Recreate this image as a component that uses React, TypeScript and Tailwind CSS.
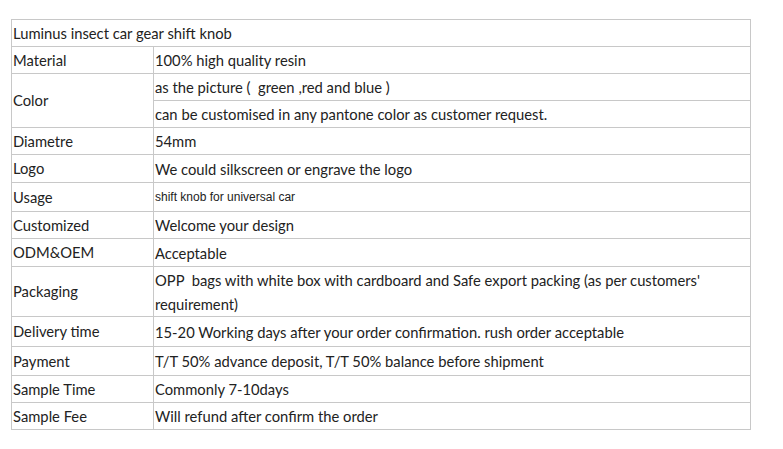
const rows: { label: string; values: string[]; h: number[]; small?: boolean }[] = [
  { label: "Material", values: ["100% high quality resin"], h: [27] },
  {
    label: "Color",
    values: ["as the picture (  green ,red and blue )", "can be customised in any pantone color as customer request."],
    h: [27, 27],
  },
  { label: "Diametre", values: ["54mm"], h: [27] },
  { label: "Logo", values: ["We could silkscreen or engrave the logo"], h: [28] },
  { label: "Usage", values: ["shift knob for universal car"], h: [29], small: true },
  { label: "Customized", values: ["Welcome your design"], h: [27] },
  { label: "ODM&OEM", values: ["Acceptable"], h: [28] },
  {
    label: "Packaging",
    values: ["OPP  bags with white box with cardboard and Safe export packing (as per customers' requirement)"],
    h: [50],
  },
  { label: "Delivery time", values: ["15-20 Working days after your order confirmation. rush order acceptable"], h: [30] },
  { label: "Payment", values: ["T/T 50% advance deposit, T/T 50% balance before shipment"], h: [29] },
  { label: "Sample Time", values: ["Commonly 7-10days"], h: [27] },
  { label: "Sample Fee", values: ["Will refund after confirm the order"], h: [27] },
];

const cell = "border border-[#c8c8c8] pl-[1px] pr-[2px] align-middle whitespace-pre-wrap";

export default function App() {
  return (
    <div className="w-[783px] h-[449px] bg-white pt-[19px] pl-[11px] font-['Lato','Liberation_Sans',sans-serif] text-[14.75px] text-[#222]">
      <table className="border-collapse w-[740px] table-fixed">
        <colgroup>
          <col className="w-[142px]" />
          <col />
        </colgroup>
        <tbody>
          <tr className="h-[27px]">
            <td colSpan={2} className={cell}>
              Luminus insect car gear shift knob
            </td>
          </tr>
          {rows.map((r) =>
            r.values.map((v, i) => (
              <tr key={r.label + i} style={{ height: r.h[i] }}>
                {i === 0 && (
                  <td rowSpan={r.values.length} className={cell}>
                    {r.label}
                  </td>
                )}
                <td
                  className={
                    cell +
                    (r.small
                      ? " text-[12px] font-['Liberation_Sans',sans-serif]"
                      : " leading-[24px]")
                  }
                >
                  {v}
                </td>
              </tr>
            ))
          )}
        </tbody>
      </table>
    </div>
  );
}
